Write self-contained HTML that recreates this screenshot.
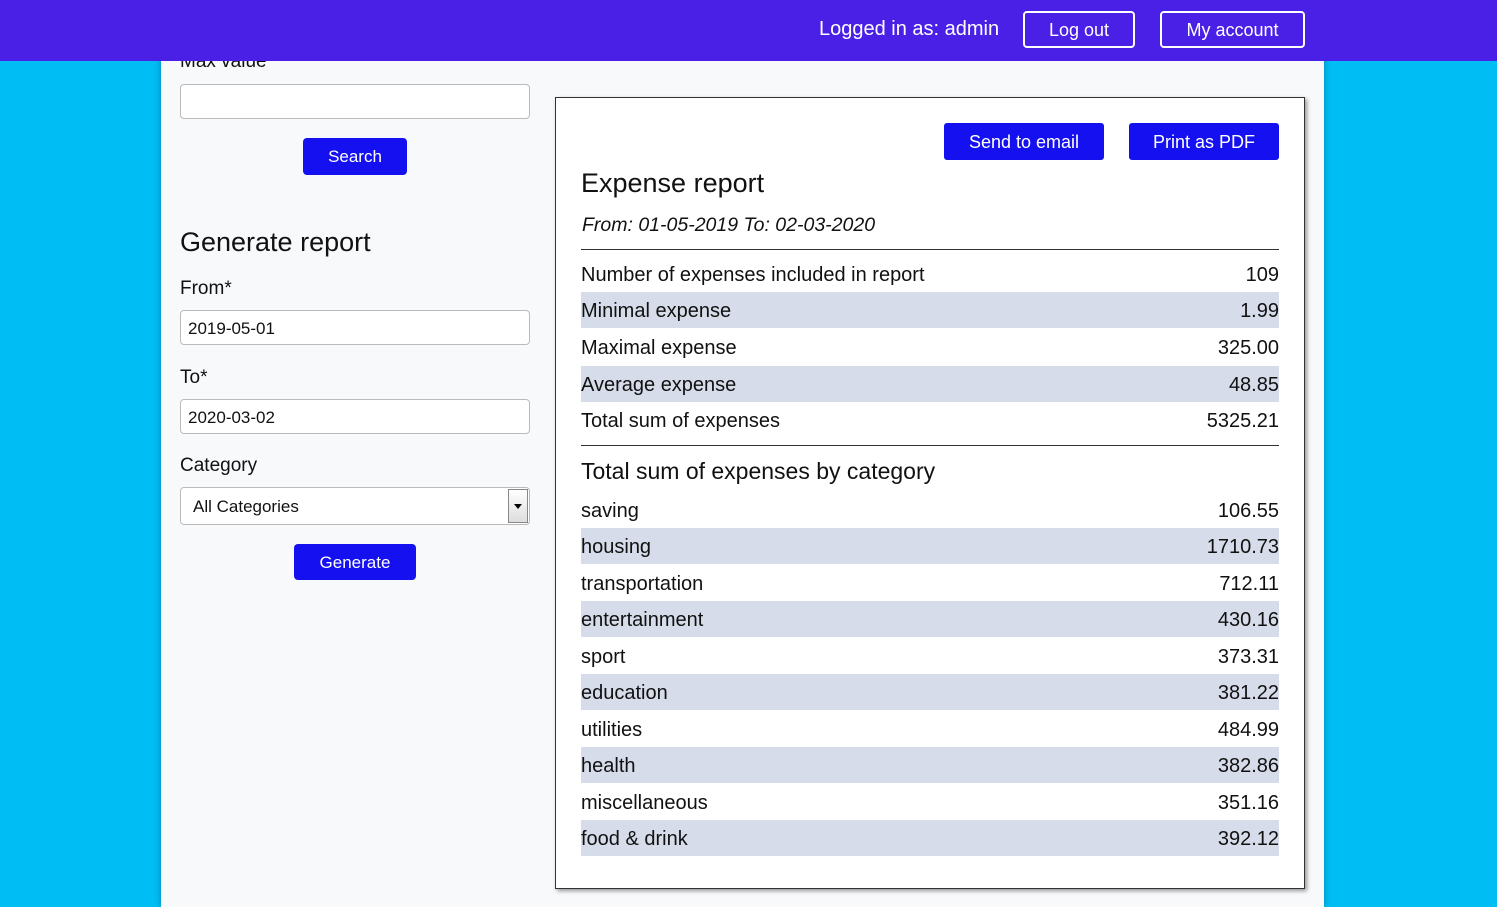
<!DOCTYPE html>
<html><head><style>
*{box-sizing:border-box;margin:0;padding:0}
body{width:1497px;height:907px;overflow:hidden;background:#00bdf4;font-family:"Liberation Sans",sans-serif;color:#111;position:relative}
.main{position:absolute;left:161px;top:0;width:1163px;height:907px;background:#f8f9fb;box-shadow:0 0 6px rgba(0,0,0,.3)}
.hdr{position:absolute;left:0;top:0;width:1497px;height:61px;background:#4a1fe6;color:#fff}
.hdr .t{position:absolute;left:819px;top:18px;font-size:20px}
.hb{position:absolute;top:11px;height:37px;border:2px solid #fff;border-radius:4px;color:#fff;font-size:18px;text-align:center;line-height:35px}
.lbl{position:absolute;left:180px;font-size:19px}
.inp{position:absolute;left:180px;width:350px;height:35px;background:#fff;border:1px solid #bbb;border-radius:4px;font-size:17px;padding-left:7px;line-height:35px}
.btn{position:absolute;background:#1410f0;color:#fff;border-radius:4px;text-align:center;font-size:17px}
.card{position:absolute;left:555px;top:97px;width:750px;height:792px;background:#fff;border:1px solid #333;box-shadow:2px 2px 4px rgba(0,0,0,.4)}
.row{position:absolute;left:581px;width:698px;height:36px;font-size:20px;line-height:38px;display:flex;justify-content:space-between}
.s{background:#d6dce9}
.hr{position:absolute;left:581px;width:698px;height:1px;background:#333}
</style></head><body>
<div class="main"></div>
<div class="lbl" style="top:51px">Max value</div>
<div class="hdr"><div class="t">Logged in as: admin</div>
<div class="hb" style="left:1023px;width:112px">Log out</div>
<div class="hb" style="left:1160px;width:145px">My account</div></div>
<div class="inp" style="top:84px"></div>
<div class="btn" style="left:303px;top:138px;width:104px;height:37px;line-height:38px">Search</div>
<div class="lbl" style="top:227px;font-size:27px">Generate report</div>
<div class="lbl" style="top:278px">From*</div>
<div class="inp" style="top:310px">2019-05-01</div>
<div class="lbl" style="top:367px">To*</div>
<div class="inp" style="top:399px">2020-03-02</div>
<div class="lbl" style="top:455px">Category</div>
<div class="inp" style="top:487px;height:38px;line-height:38px;padding-left:12px">All Categories
<div style="position:absolute;right:1px;top:1px;width:20px;height:34px;border:1px solid #888;background:linear-gradient(#fff,#ddd)"><div style="position:absolute;left:5px;top:14px;border-left:4px solid transparent;border-right:4px solid transparent;border-top:5px solid #000"></div></div></div>
<div class="btn" style="left:294px;top:544px;width:122px;height:36px;line-height:38px">Generate</div>
<div class="card"></div>
<div class="btn" style="left:944px;top:123px;width:160px;height:37px;line-height:38px;font-size:18px;border-radius:3px">Send to email</div>
<div class="btn" style="left:1129px;top:123px;width:150px;height:37px;line-height:38px;font-size:18px;border-radius:3px">Print as PDF</div>
<div style="position:absolute;left:581px;top:168px;font-size:27px">Expense report</div>
<div style="position:absolute;left:582px;top:214px;font-size:19.5px;font-style:italic">From: 01-05-2019 To: 02-03-2020</div>
<div class="hr" style="top:249px"></div>
<div class="row" style="top:256px"><span>Number of expenses included in report</span><span>109</span></div>
<div class="row s" style="top:292px"><span>Minimal expense</span><span>1.99</span></div>
<div class="row" style="top:329px"><span>Maximal expense</span><span>325.00</span></div>
<div class="row s" style="top:366px"><span>Average expense</span><span>48.85</span></div>
<div class="row" style="top:402px"><span>Total sum of expenses</span><span>5325.21</span></div>
<div class="hr" style="top:445px"></div>
<div style="position:absolute;left:581px;top:458px;font-size:23px">Total sum of expenses by category</div>
<div class="row" style="top:492px"><span>saving</span><span>106.55</span></div>
<div class="row s" style="top:528px"><span>housing</span><span>1710.73</span></div>
<div class="row" style="top:565px"><span>transportation</span><span>712.11</span></div>
<div class="row s" style="top:601px"><span>entertainment</span><span>430.16</span></div>
<div class="row" style="top:638px"><span>sport</span><span>373.31</span></div>
<div class="row s" style="top:674px"><span>education</span><span>381.22</span></div>
<div class="row" style="top:711px"><span>utilities</span><span>484.99</span></div>
<div class="row s" style="top:747px"><span>health</span><span>382.86</span></div>
<div class="row" style="top:784px"><span>miscellaneous</span><span>351.16</span></div>
<div class="row s" style="top:820px"><span>food &amp; drink</span><span>392.12</span></div>
</body></html>
